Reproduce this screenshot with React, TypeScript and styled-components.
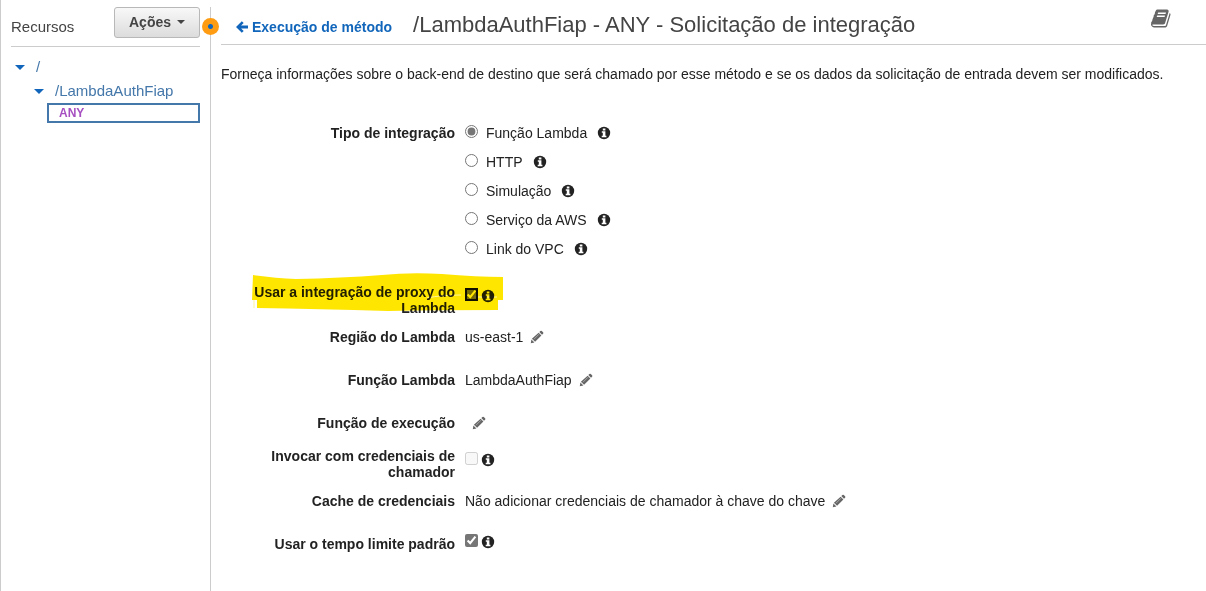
import React from "react";
import styled, { createGlobalStyle } from "styled-components";

const GlobalStyle = createGlobalStyle`
  * { box-sizing: border-box; }
  body {
    margin: 0;
    background: #fff;
    color: #222;
    font: 14px/16px "Liberation Sans", Arial, sans-serif;
  }
`;

const Page = styled.div`
  display: flex;
  min-height: 100vh;
  border-left: 1px solid #ccc;
`;

const Sidebar = styled.aside`
  flex: 0 0 209px;
  padding: 7px 10px 0;
`;

const SidebarHeader = styled.header`
  display: flex;
  align-items: center;
  justify-content: space-between;
  height: 40px;
  padding-bottom: 8px;
  border-bottom: 1px solid #ccc;
`;

const SidebarTitle = styled.h2`
  margin: 0;
  padding-top: 8px;
  font-size: 15px;
  font-weight: 400;
  color: #444;
`;

const ActionsButton = styled.button`
  display: flex;
  align-items: center;
  justify-content: center;
  gap: 6px;
  width: 86px;
  height: 31px;
  padding: 0 0 1px;
  border: 1px solid #b8b8b8;
  border-radius: 3px;
  background: linear-gradient(#f8f8f8, #dcdcdc);
  color: #444;
  font: bold 14px/16px "Liberation Sans", Arial, sans-serif;
`;

const Caret = styled.span<{ $wide?: boolean }>`
  border: solid transparent;
  border-width: ${(p) => (p.$wide ? "5px 5px 0" : "4px 4px 0")};
  border-top-color: ${(p) => (p.$wide ? "#1166bb" : "#444")};
`;

const Tree = styled.ul`
  margin: 0;
  padding: 8px 0 0;
  list-style: none;
`;

const TreeItem = styled.li<{ $level: number }>`
  display: flex;
  align-items: center;
  gap: 11px;
  height: 24px;
  padding-left: ${(p) => 4 + p.$level * 19}px;
`;

const TreeLink = styled.a`
  color: #4477aa;
  font-size: 15px;
  text-decoration: none;
`;

const MethodItem = styled.li`
  height: 20px;
  line-height: 15px;
  margin-left: 36px;
  padding-left: 10px;
  border: 2px solid #4477aa;
`;

const MethodLink = styled.a`
  color: #a64fc1;
  font-size: 12px;
  font-weight: bold;
  text-decoration: none;
`;

const Main = styled.main`
  position: relative;
  flex: 1;
  min-width: 0;
  margin-top: 7px;
  padding-left: 10px;
  border-left: 1px solid #ccc;
`;

const ResizeHandle = styled.span`
  position: absolute;
  top: 11px;
  left: -9px;
  width: 17px;
  height: 17px;
  border-radius: 50%;
  background: radial-gradient(circle, #1166bb 0 2px, #ff9c12 3px);
`;

const MainHeader = styled.header`
  display: flex;
  align-items: center;
  height: 38px;
  padding: 0 34px 3px 15px;
  border-bottom: 1px solid #ccc;
`;

const BackLink = styled.a`
  display: flex;
  align-items: center;
  gap: 4px;
  padding-top: 6px;
  color: #1166bb;
  font-weight: bold;
  text-decoration: none;
`;

const Title = styled.h1`
  flex: 1;
  margin: 0 0 0 21px;
  padding-top: 1px;
  color: #444;
  font-size: 22px;
  line-height: 24px;
  font-weight: 400;
`;

const DocsLink = styled.a`
  display: flex;
  padding-bottom: 12px;
  color: #666;
`;

const Intro = styled.p`
  margin: 21px 0 43px;
`;

const Form = styled.form`
  display: grid;
  gap: 3px;
`;

const Field = styled.div<{ $compact?: boolean }>`
  position: relative;
  display: grid;
  grid-template-columns: 234px 1fr;
  column-gap: 10px;
  align-items: start;
  min-height: ${(p) => (p.$compact ? 32 : 40)}px;
  padding-top: ${(p) => (p.$compact ? 0 : 10)}px;
`;

const RadioField = styled.fieldset`
  display: grid;
  grid-template-columns: 234px 1fr;
  column-gap: 10px;
  margin: 0;
  padding: 0 0 24px;
  border: 0;
`;

const FieldName = styled.label`
  font-weight: bold;
  text-align: right;
`;

const GroupName = styled.span`
  font-weight: bold;
  text-align: right;
`;

const Options = styled.div`
  display: grid;
  gap: 13px;
`;

const Option = styled.div`
  display: flex;
  align-items: center;
  height: 16px;
`;

const OptionLabel = styled.label`
  margin: 0 10px 0 8px;
`;

const Radio = styled.input`
  width: 13px;
  height: 13px;
  margin: 0 0 3px;
  accent-color: #767676;
`;

const Value = styled.div`
  display: flex;
  align-items: center;
  gap: 7px;
  height: 16px;
`;

const CheckValue = styled.div<{ $compact?: boolean }>`
  display: flex;
  align-items: center;
  gap: 3px;
  height: 16px;
  margin-top: ${(p) => (p.$compact ? 4 : -2)}px;
`;

const Checkbox = styled.input<{ $focused?: boolean }>`
  width: 13px;
  height: 13px;
  margin: 0 0 3px;
  accent-color: #767676;
  outline: ${(p) => (p.$focused ? "2px solid #111" : "none")};
  outline-offset: -2px;
`;

const EditButton = styled.button`
  display: flex;
  padding: 0;
  border: 0;
  background: none;
  color: #666;
`;

const Marker = styled.svg`
  position: absolute;
  top: -11px;
  left: 30px;
  width: 253px;
  height: 40px;
  mix-blend-mode: multiply;
  pointer-events: none;
`;

const InfoIcon = () => (
  <svg width="14" height="14" viewBox="0 0 14 14" role="img" aria-label="Informações">
    <circle cx="7" cy="7" r="6.2" fill="currentColor" />
    <path d="M5.8 2.4h2.6v2H5.8zM4.8 5.3h3.6v4.4h1v1.5H4.7V9.7h1.1V6.8h-1z" fill="#fff" />
  </svg>
);

const BookIcon = () => (
  <svg width="21" height="21" viewBox="0 0 1792 1792" fill="currentColor" aria-hidden="true">
    <path d="M1639 478q40 57 18 129l-275 906q-19 64-76.5 107.5t-122.5 43.5h-923q-77 0-148.5-53.5t-99.5-131.5q-24-67-2-127 0-4 3-27t4-37q1-8-3-21.5t-3-19.5q2-11 8-21t16.5-23.5 16.5-23.5q23-38 45-91.5t30-91.5q3-10 .5-30t-.5-28q3-11 17-28t17-23q21-36 42-92t25-90q1-9-2.5-32t.5-28q4-13 22-30.5t22-22.5q19-26 42.5-84.5t27.5-96.5q1-8-3-25.5t-2-26.5q2-8 9-18t18-23 17-21q8-12 16.5-30.5t15-35 16-36 19.5-32 26.5-23.5 36-11.5 47.5 5.5l-1 3q38-9 51-9h761q74 0 114 56t18 130l-274 906q-36 119-71.5 153.5t-128.5 34.5h-869q-27 0-38 15-11 16-1 43 24 70 144 70h923q29 0 56-15.5t35-41.5l300-987q7-22 5-57 38 15 59 43zm-1064 2q-4 13 2 22.5t20 9.5h608q13 0 25.5-9.5t16.5-22.5l21-64q4-13-2-22.5t-20-9.5h-608q-13 0-25.5 9.5t-16.5 22.5zm-83 256q-4 13 2 22.5t20 9.5h608q13 0 25.5-9.5t16.5-22.5l21-64q4-13-2-22.5t-20-9.5h-608q-13 0-25.5 9.5t-16.5 22.5z" />
  </svg>
);

const ArrowIcon = () => (
  <svg width="12" height="12" viewBox="0 0 12 12" fill="currentColor" aria-hidden="true">
    <path d="M5.8.2 7.7 2 5.1 4.6H12v2.8H5.1L7.7 10l-1.9 1.8L0 6z" />
  </svg>
);

const PencilIcon = () => (
  <svg width="14" height="14" viewBox="0 0 14 14" fill="currentColor" aria-hidden="true">
    <path d="M9.3 2.1 10.4 1q.7-.6 1.4 0l1.3 1.3q.6.7 0 1.4L12 4.8zM8.6 2.7l2.8 2.8-6.3 6.3-3.2-3zM1.4 9.5l3 3-3.6.7z" />
    <path d="M3.9 9.3 9 4.2" stroke="#fff" strokeWidth=".7" opacity=".6" />
  </svg>
);

const Edit = ({ name }: { name: string }) => (
  <EditButton type="button" aria-label={`Editar ${name}`}>
    <PencilIcon />
  </EditButton>
);

const integrationTypes = ["Função Lambda", "HTTP", "Simulação", "Serviço da AWS", "Link do VPC"];

const TextField = ({ name, value }: { name: string; value?: string }) => (
  <Field>
    <FieldName as="span">{name}</FieldName>
    <Value>
      <span>{value}</span>
      <Edit name={name} />
    </Value>
  </Field>
);

type CheckFieldProps = {
  id: string;
  name: string;
  checked?: boolean;
  disabled?: boolean;
  compact?: boolean;
  focused?: boolean;
  children?: React.ReactNode;
};

const CheckField = ({ id, name, checked, disabled, compact, focused, children }: CheckFieldProps) => (
  <Field $compact={compact}>
    <FieldName htmlFor={id}>{name}</FieldName>
    <CheckValue $compact={compact}>
      <Checkbox id={id} type="checkbox" defaultChecked={checked} disabled={disabled} $focused={focused} />
      <InfoIcon />
    </CheckValue>
    {children}
  </Field>
);

export default function App() {
  return (
    <>
      <GlobalStyle />
      <Page>
        <Sidebar>
          <SidebarHeader>
            <SidebarTitle>Recursos</SidebarTitle>
            <ActionsButton type="button">
              Ações <Caret />
            </ActionsButton>
          </SidebarHeader>
          <Tree>
            <TreeItem $level={0}>
              <Caret $wide />
              <TreeLink href="#root">/</TreeLink>
            </TreeItem>
            <TreeItem $level={1}>
              <Caret $wide />
              <TreeLink href="#lambda">/LambdaAuthFiap</TreeLink>
            </TreeItem>
            <MethodItem>
              <MethodLink href="#any">ANY</MethodLink>
            </MethodItem>
          </Tree>
        </Sidebar>
        <Main>
          <ResizeHandle />
          <MainHeader>
            <BackLink href="#metodo">
              <ArrowIcon />
              Execução de método
            </BackLink>
            <Title>/LambdaAuthFiap - ANY - Solicitação de integração</Title>
            <DocsLink href="#docs" aria-label="Documentação">
              <BookIcon />
            </DocsLink>
          </MainHeader>
          <Intro>
            Forneça informações sobre o back-end de destino que será chamado por esse método e se os dados da
            solicitação de entrada devem ser modificados.
          </Intro>
          <Form>
            <RadioField aria-labelledby="tipo">
              <GroupName id="tipo">Tipo de integração</GroupName>
              <Options>
                {integrationTypes.map((type, i) => (
                  <Option key={type}>
                    <Radio id={`tipo-${i}`} type="radio" name="tipo" defaultChecked={i === 0} />
                    <OptionLabel htmlFor={`tipo-${i}`}>{type}</OptionLabel>
                    <InfoIcon />
                  </Option>
                ))}
              </Options>
            </RadioField>
            <CheckField id="proxy" name="Usar a integração de proxy do Lambda" checked compact focused>
              <Marker viewBox="0 0 253 40" aria-hidden="true">
                <path
                  d="M2 2Q25 5 45 6q45-1 86-4 28-3 60-1 35 3 61 3v23h-5v10q-60 0-110 1-70-2-131-3V27H1z"
                  fill="#ffe600"
                />
                <path d="M176 25q14-3 34-3M223 24h23M3 27v8" fill="none" stroke="#fff59c" />
              </Marker>
            </CheckField>
            <TextField name="Região do Lambda" value="us-east-1" />
            <TextField name="Função Lambda" value="LambdaAuthFiap" />
            <TextField name="Função de execução" />
            <CheckField id="credenciais" name="Invocar com credenciais de chamador" disabled compact />
            <TextField name="Cache de credenciais" value="Não adicionar credenciais de chamador à chave do chave" />
            <CheckField id="tempo" name="Usar o tempo limite padrão" checked />
          </Form>
        </Main>
      </Page>
    </>
  );
}
